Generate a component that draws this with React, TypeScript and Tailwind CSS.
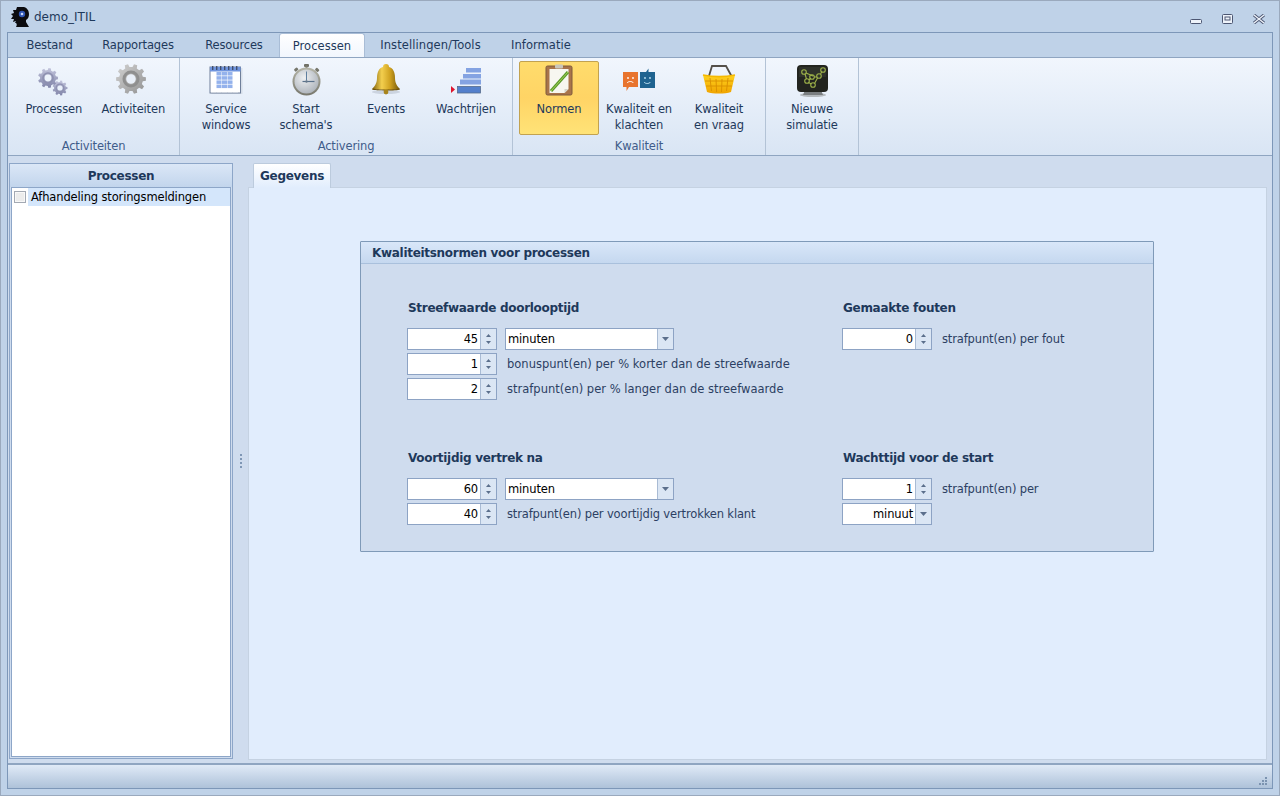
import React from "react";

function gearPath(cx: number, cy: number, r: number, teeth: number, hole: number) {
  const pts: string[] = [];
  const step = (Math.PI * 2) / teeth;
  for (let i = 0; i < teeth; i++) {
    const a = i * step;
    const seq: [number, number][] = [
      [a - step * 0.3, r * 0.8],
      [a - step * 0.18, r],
      [a + step * 0.18, r],
      [a + step * 0.3, r * 0.8],
    ];
    for (const [t, rad] of seq) pts.push(`${(cx + Math.cos(t) * rad).toFixed(2)} ${(cy + Math.sin(t) * rad).toFixed(2)}`);
  }
  const ring = `M${cx - hole} ${cy}a${hole} ${hole} 0 1 0 ${hole * 2} 0a${hole} ${hole} 0 1 0 ${-hole * 2} 0Z`;
  return `M${pts.join("L")}Z${ring}`;
}

const Svg = ({ children }: { children: React.ReactNode }) => (
  <svg width="36" height="36" viewBox="0 0 36 36" className="block">{children}</svg>
);

const GearsIcon = () => (
  <Svg>
    <defs>
      <linearGradient id="g1" x1="0" y1="0" x2="0" y2="1"><stop offset="0" stopColor="#c2c4dc" /><stop offset="1" stopColor="#8084a8" /></linearGradient>
    </defs>
    <path d={gearPath(12, 15, 10, 9, 3.4)} fill="url(#g1)" fillRule="evenodd" />
    <circle cx="12" cy="15" r="5" fill="none" stroke="#8d90b0" strokeWidth="1.6" />
    <path d={gearPath(24, 25, 7.5, 9, 2.6)} fill="url(#g1)" fillRule="evenodd" />
    <circle cx="24" cy="25" r="3.8" fill="none" stroke="#8d90b0" strokeWidth="1.3" />
  </Svg>
);

const GearIcon = () => (
  <Svg>
    <defs>
      <linearGradient id="g2" x1="0" y1="0" x2="1" y2="1"><stop offset="0" stopColor="#d2d2d2" /><stop offset="1" stopColor="#929292" /></linearGradient>
    </defs>
    <path d={gearPath(16, 16, 15, 10, 4.5)} fill="url(#g2)" fillRule="evenodd" />
    <circle cx="16" cy="16" r="7" fill="none" stroke="#8f8f8f" strokeWidth="3" />
    <circle cx="16" cy="16" r="4.5" fill="#e9eff8" />
  </Svg>
);

const CalendarIcon = () => {
  const cols = [3, 8.5, 14, 19.5, 25];
  const rows = [9, 13.2, 17.4, 21.6, 25.8];
  return (
    <Svg>
      <rect x="3.5" y="5" width="31" height="26" fill="#c3cbd8" opacity="0.5" />
      <rect x="2" y="4" width="30.500" height="26" fill="#ffffff" stroke="#6f7f9a" />
      <rect x="2" y="4" width="30.500" height="4.500" fill="#6f94de" />
      {cols.map((c, i) =>
        rows.map((r, j) => (
          <rect key={`${i}-${j}`} x={c} y={r} width="5" height="3.500" fill={i === 0 || i === 4 ? "#ffffff" : j === 4 ? "#ffffff" : "#94b2ec"} />
        ))
      )}
      {[4, 8, 12, 16, 20, 24, 28].map((x) => (
        <rect key={x} x={x} y="3" width="1.400" height="4" fill="#3f4f70" />
      ))}
    </Svg>
  );
};

const WatchIcon = () => (
  <Svg>
    <defs>
      <radialGradient id="w1" cx="0.4" cy="0.35" r="0.8"><stop offset="0" stopColor="#eef0f2" /><stop offset="1" stopColor="#a3aab2" /></radialGradient>
      <linearGradient id="w2" x1="0" y1="0" x2="0" y2="1"><stop offset="0" stopColor="#b5b5a8" /><stop offset="1" stopColor="#77776c" /></linearGradient>
    </defs>
    <g transform="translate(1.500 -1.500)">
      <rect x="14.500" y="2.500" width="5" height="3" rx="1" fill="#6e6e64" />
      <rect x="16" y="4" width="2" height="4" fill="#7c7c70" />
      <rect x="26" y="7" width="4" height="3" rx="1" fill="#77776c" transform="rotate(40 28 8)" />
      <rect x="4.500" y="7" width="4" height="3" rx="1" fill="#77776c" transform="rotate(-40 6 8)" />
      <circle cx="17" cy="20" r="14" fill="url(#w2)" />
      <circle cx="17" cy="20" r="12" fill="url(#w1)" />
      <path d="M17 10v9" stroke="#5f7f9f" strokeWidth="1" />
      <path d="M13 20h12" stroke="#59718a" strokeWidth="1.200" />
      <circle cx="17" cy="20" r="1.200" fill="#66788a" />
    </g>
  </Svg>
);

const BellIcon = () => (
  <Svg>
    <defs>
      <linearGradient id="b1" x1="0" y1="0" x2="1" y2="0"><stop offset="0" stopColor="#7d5f0c" /><stop offset="0.35" stopColor="#f3cf4e" /><stop offset="0.65" stopColor="#cfa11f" /><stop offset="1" stopColor="#6f540a" /></linearGradient>
    </defs>
    <g transform="translate(0 -1)">
      <ellipse cx="18" cy="30" rx="14" ry="2" fill="#bfc8d4" opacity="0.7" />
      <path d="M18 2c-2 0-3 1-3 3-4 1-6 5-6 11 0 6-3 9-5 11 3 1.500 25 1.500 28 0-2-2-5-5-5-11 0-6-2-10-6-11 0-2-1-3-3-3z" fill="url(#b1)" />
      <path d="M5 26.500c4 1.500 22 1.500 26 0l1 1c-3 1.500-25 1.500-28 0z" fill="#6e520b" />
      <circle cx="18" cy="30" r="2.400" fill="#a8841c" />
    </g>
  </Svg>
);

const QueueIcon = () => (
  <Svg>
    <g transform="translate(-4 -1)">
      <rect x="22" y="6" width="15" height="4.500" fill="#84a3e2" />
      <rect x="19" y="12" width="18" height="4.500" fill="#84a3e2" />
      <rect x="16" y="17.500" width="21" height="5" fill="#84a3e2" />
      <rect x="13.500" y="24.500" width="23" height="6.500" fill="#5480cc" stroke="#566b8c" strokeWidth="0.800" />
      <path d="M7 24v7l4-3.500z" fill="#e0142c" />
    </g>
  </Svg>
);

const ClipIcon = () => (
  <Svg>
    <rect x="5" y="3" width="26" height="29" rx="1.500" fill="#a9744a" stroke="#7e5a3c" />
    <path d="M8.500 6h19v20l-4 4h-15z" fill="#f7f7f0" />
    <path d="M27.500 26l-4 4v-4z" fill="#d5d5c8" />
    <rect x="14" y="1.500" width="8" height="4" rx="1" fill="#c9c6bb" />
    <path d="M27 9L10 28" stroke="#5a9a2a" strokeWidth="3.200" />
    <path d="M27 9L10 28" stroke="#a3cf56" strokeWidth="1" />
  </Svg>
);

const FacesIcon = () => (
  <Svg>
    <g transform="translate(1 -3)">
      <path d="M1 12h15v15H7l-2.500 4v-4H1z" fill="#e8742e" />
      <circle cx="6" cy="18" r="0.900" fill="#fff" /><circle cx="11" cy="18" r="0.900" fill="#fff" />
      <path d="M5 23c1.500-2 5-2 6.500 0" stroke="#fff" fill="none" />
    </g>
    <g transform="translate(1 0)">
      <path d="M18 9h6l2.500-3.500V9H33v16H18z" fill="#1f6390" />
      <circle cx="23" cy="15" r="0.900" fill="#bfe3f5" /><circle cx="28" cy="15" r="0.900" fill="#bfe3f5" />
      <path d="M22 19c1.500 2 5 2 6.500 0" stroke="#bfe3f5" fill="none" />
    </g>
  </Svg>
);

const BasketIcon = () => (
  <Svg>
    <defs>
      <linearGradient id="k1" x1="0" y1="0" x2="0" y2="1"><stop offset="0" stopColor="#ffd21e" /><stop offset="1" stopColor="#f0a400" /></linearGradient>
    </defs>
    <g transform="translate(0 -2)">
      <path d="M8 15L11 5h14l6 11" fill="none" stroke="#54504a" strokeWidth="1.800" />
      <path d="M2 14c10 2 22 2 32 0l-4 17c-6 2-18 2-24 0z" fill="url(#k1)" />
      <path d="M9 17l1.500 13M15 18l.6 13M21 18l-.5 13M27 17l-1.500 13M4 20h28M5 25h26" stroke="#d98e00" strokeWidth="0.900" />
      <path d="M2 14c10 2 22 2 32 0" fill="none" stroke="#f5b800" strokeWidth="1.600" />
    </g>
  </Svg>
);

const MonitorIcon = () => (
  <Svg>
    <g transform="translate(1 -1)">
      <ellipse cx="18" cy="33" rx="13" ry="2" fill="#b4b9bd" />
      <path d="M10 28h16l2 5H8z" fill="#7a7e80" />
      <rect x="2" y="3" width="31" height="27" rx="4" fill="#22241f" />
      <path d="M4 5h27v10H4z" fill="#3a3d35" opacity="0.5" />
      <g fill="none" stroke="#9db24a" strokeWidth="1.100">
        <circle cx="9" cy="10" r="2.300" /><circle cx="12" cy="19" r="2.300" /><circle cx="17" cy="15" r="2.300" /><circle cx="24" cy="14" r="2.300" /><circle cx="28" cy="8" r="2.300" /><circle cx="18" cy="23" r="2.300" />
        <path d="M11 11l7 3M10 12l1.500 5M14 18l2-2M19 15h3M25.500 12l1.500-2.500M13.500 20.500l3 1.500M22.500 16l-3 5.500" />
      </g>
    </g>
  </Svg>
);

const Logo = () => (
  <svg width="19" height="20" viewBox="0 0 19 20" className="block">
    <path d="M9 0c5-1 9 2 9 7 0 3-1 5-3 6v2c1 2 2 3 3 5H5c1-2 1-3 0-4l-1 0 1-2-3 1 1-3-3 0 2-3-2-2 3-1-1-3 3 0 1-3z" fill="#0b0b0f" />
    <circle cx="11" cy="7" r="3.200" fill="#2f55b5" />
    <circle cx="11" cy="7" r="1.300" fill="#c8d8f8" />
  </svg>
);

const RibbonButton = ({ icon, lines, active }: { icon: React.ReactNode; lines: string[]; active?: boolean }) => (
  <div className={`w-[80px] h-[74px] flex flex-col items-center rounded-[2px] border ${active ? "border-[#c2a250] bg-gradient-to-b from-[#ffdc6c] via-[#ffd465] to-[#ffe377]" : "border-transparent"}`}>
    <div className="mt-[1px] h-[36px]">{icon}</div>
    <div className="mt-[2px] text-center leading-[16px] text-[#1e395b]">
      {lines.map((l) => <div key={l} className="whitespace-nowrap">{l}</div>)}
    </div>
  </div>
);

const RibbonGroup = ({ label, children, w }: { label: string; children?: React.ReactNode; w: string }) => (
  <div className={`${w} flex flex-col border-r border-[#b3c3d6]`}>
    <div className="flex px-[6px] pt-[3px] h-[77px] box-content">{children}</div>
    <div className="h-[16px] leading-[16px] text-center text-[#3f5c8a]">{label}</div>
  </div>
);

const Arrow = ({ up }: { up: boolean }) => (
  <svg width="5" height="3" viewBox="0 0 5 3" className="block">
    <path d={up ? "M2.500 0L5 3H0z" : "M0 0h5L2.500 3z"} fill="#5b6f8c" />
  </svg>
);

const Spin = ({ value }: { value: string }) => (
  <div className="w-[90px] h-[22px] flex border border-[#8da3c4] bg-white shrink-0">
    <div className="flex-1 text-right pr-[2px] leading-[21px] text-black">{value}</div>
    <div className="w-[16px] border-l border-[#a9bbd4] bg-[#dbe6f4] flex flex-col items-center justify-center gap-[4px]">
      <Arrow up /><Arrow up={false} />
    </div>
  </div>
);

const Combo = ({ value, w, right }: { value: string; w: string; right?: boolean }) => (
  <div className={`${w} h-[22px] flex border border-[#8da3c4] bg-white shrink-0`}>
    <div className={`flex-1 leading-[21px] text-black ${right ? "text-right pr-[2px]" : "pl-[2px]"}`}>{value}</div>
    <div className="w-[16px] border-l border-[#a9bbd4] bg-[#dbe6f4] flex items-center justify-center">
      <svg width="7" height="4" viewBox="0 0 7 4" className="block"><path d="M0 0h7L3.500 4z" fill="#5b6f8c" /></svg>
    </div>
  </div>
);

const Row = ({ children }: { children: React.ReactNode }) => (
  <div className="flex items-center h-[22px]">{children}</div>
);

const Note = ({ children, wide }: { children: React.ReactNode; wide?: boolean }) => (
  <span className={`ml-[10px] text-[#2c3f63] whitespace-nowrap leading-[18px] mt-[-1px] ${wide ? "tracking-[0.01px]" : ""}`}>{children}</span>
);

const Heading = ({ children }: { children: React.ReactNode }) => (
  <div className="text-[12px] font-bold text-[#1e395b] leading-[16px] h-[16px] mb-[12px] ml-[1px] whitespace-nowrap tracking-[-0.3px]">{children}</div>
);

const tabs = [
  ["Bestand", "w-[75px]", ""],
  ["Rapportages", "w-[102px]", ""],
  ["Resources", "w-[90px]", ""],
  ["Processen", "w-[86px]", "tracking-[0.05px]"],
  ["Instellingen/Tools", "w-[131px]", "tracking-[0.08px]"],
  ["Informatie", "w-[90px]", "tracking-[0.05px]"],
];

export default function App() {
  return (
    <div className="w-[1280px] h-[796px] flex flex-col bg-[#bfd2e8] border border-[#9aa9bd] text-[11.5px] tracking-[-0.14px] font-['DejaVu_Sans',sans-serif] overflow-hidden">
      <div className="h-[31px] flex items-center pl-[10px] shrink-0">
        <Logo />
        <span className="ml-[4px] text-[#1e395b] text-[12px] tracking-normal mt-[1px]">demo_ITIL</span>
        <div className="ml-auto mr-[14px] mt-[4px] flex items-center gap-[20px]">
          <svg width="12" height="6" viewBox="0 0 12 6" className="block mt-[6px]"><rect x="0.500" y="0.500" width="11" height="4" rx="1" fill="#eef3fa" stroke="#4c5672" /></svg>
          <svg width="11" height="10" viewBox="0 0 11 10" className="block"><rect x="0.500" y="0.500" width="10" height="9" rx="1" fill="#eef3fa" stroke="#4c5672" /><rect x="3" y="3" width="5" height="3" fill="none" stroke="#4c5672" /></svg>
          <svg width="12" height="10" viewBox="0 0 12 10" className="block"><path d="M1 1l10 8M11 1L1 9" stroke="#4c5672" strokeWidth="3.200" /><path d="M1 1l10 8M11 1L1 9" stroke="#eef3fa" strokeWidth="1.400" /></svg>
        </div>
      </div>

      <div className="flex-1 mx-[6px] mb-[6px] flex flex-col border border-[#7d97b8] min-h-0">
        <div className="h-[24px] flex items-end pl-[4px] bg-[#bfd2e8] shrink-0">
          {tabs.map(([t, w, track]) => (
            <div
              key={t}
              className={`${w} ${track} h-[24px] leading-[25px] text-center text-[#1e395b] ${t === "Processen" ? "rounded-t-[3px] bg-gradient-to-b from-white to-[#f1f6fd] border border-b-0 border-[#a9bdd6]" : ""}`}
            >
              {t}
            </div>
          ))}
        </div>
        <div className="h-[99px] shrink-0 flex bg-gradient-to-b from-[#f1f6fd] to-[#d9e5f4] border-t border-b border-[#8fa5c1]">
          <RibbonGroup label="Activiteiten" w="w-[172px]">
            <RibbonButton icon={<GearsIcon />} lines={["Processen"]} />
            <RibbonButton icon={<GearIcon />} lines={["Activiteiten"]} />
          </RibbonGroup>
          <RibbonGroup label="Activering" w="w-[333px]">
            <RibbonButton icon={<CalendarIcon />} lines={["Service", "windows"]} />
            <RibbonButton icon={<WatchIcon />} lines={["Start", "schema's"]} />
            <RibbonButton icon={<BellIcon />} lines={["Events"]} />
            <RibbonButton icon={<QueueIcon />} lines={["Wachtrijen"]} />
          </RibbonGroup>
          <RibbonGroup label="Kwaliteit" w="w-[253px]">
            <RibbonButton active icon={<ClipIcon />} lines={["Normen"]} />
            <RibbonButton icon={<FacesIcon />} lines={["Kwaliteit en", "klachten"]} />
            <RibbonButton icon={<BasketIcon />} lines={["Kwaliteit", "en vraag"]} />
          </RibbonGroup>
          <RibbonGroup label="" w="w-[93px]">
            <RibbonButton icon={<MonitorIcon />} lines={["Nieuwe", "simulatie"]} />
          </RibbonGroup>
        </div>

        <div className="flex-1 flex min-h-0 bg-[#cfdcee]">
          <div className="w-[224px] ml-[1px] mt-[7px] mb-[4px] flex flex-col border border-[#8da6c8] shrink-0">
            <div className="h-[23px] text-[12px] text-center font-bold leading-[24px] text-[#1e395b] bg-gradient-to-b from-[#dbe7f7] to-[#c2d5ec] tracking-[-0.3px] shrink-0">Processen</div>
            <div className="flex-1 mx-[1px] mb-[1px] bg-white border border-[#8da6c8]">
              <div className="h-[18px] flex items-center pl-[2px]">
                <div className="w-[12px] h-[12px] border border-[#a3a9b3] bg-[#ececec] shadow-[inset_0_0_0_1px_#f8f8f8] shrink-0" />
                <div className="flex-1 ml-[2px] h-[18px] bg-[#d4e6fb] pl-[3px] leading-[19px] text-black whitespace-nowrap">Afhandeling storingsmeldingen</div>
              </div>
            </div>
          </div>

          <div className="w-[15px] flex flex-col items-center justify-center gap-[1px] shrink-0 pt-[4px]">
            {[0, 1, 2, 3].map((i) => <div key={i} className="w-[2px] h-[2px] mb-[1px] bg-[#7f97b5]" />)}
          </div>

          <div className="flex-1 flex flex-col min-w-0 mr-[5px] mb-[3px]">
            <div className="h-[24px] mt-[7px] pl-[5px] flex items-end shrink-0">
              <div className="w-[78px] h-[25px] relative top-[1px] text-[12px] text-center font-bold text-[#1e395b] leading-[24px] rounded-t-[2px] bg-gradient-to-b from-white to-[#e1edfd] border border-b-0 border-[#bccbdd] tracking-[-0.3px]">Gegevens</div>
            </div>
            <div className="flex-1 bg-[#e1edfd] border border-[#c5d2e2] pt-[53px] pl-[111px]">
              <div className="w-[794px] h-[311px] bg-[#cfdcee] border border-[#7f9ab8] rounded-[1px] flex flex-col">
                <div className="h-[22px] text-[12px] pl-[11px] font-bold leading-[23px] text-[#1e395b] bg-gradient-to-b from-[#d9e7f9] to-[#c5d8ef] border-b border-[#a9c0dc] tracking-[-0.3px] shrink-0">Kwaliteitsnormen voor processen</div>
                <div className="grid grid-cols-[435px_1fr] grid-rows-[150px_auto] pl-[46px] pt-[36px]">
                  <div>
                    <Heading>Streefwaarde doorlooptijd</Heading>
                    <div className="flex flex-col gap-[3px]">
                      <Row><Spin value="45" /><div className="ml-[8px]"><Combo value="minuten" w="w-[169px]" /></div></Row>
                      <Row><Spin value="1" /><Note wide>bonuspunt(en) per % korter dan de streefwaarde</Note></Row>
                      <Row><Spin value="2" /><Note wide>strafpunt(en) per % langer dan de streefwaarde</Note></Row>
                    </div>
                  </div>
                  <div>
                    <Heading>Gemaakte fouten</Heading>
                    <Row><Spin value="0" /><Note>strafpunt(en) per fout</Note></Row>
                  </div>
                  <div>
                    <Heading>Voortijdig vertrek na</Heading>
                    <div className="flex flex-col gap-[3px]">
                      <Row><Spin value="60" /><div className="ml-[8px]"><Combo value="minuten" w="w-[169px]" /></div></Row>
                      <Row><Spin value="40" /><Note>strafpunt(en) per voortijdig vertrokken klant</Note></Row>
                    </div>
                  </div>
                  <div>
                    <Heading>Wachttijd voor de start</Heading>
                    <div className="flex flex-col gap-[3px]">
                      <Row><Spin value="1" /><Note>strafpunt(en) per</Note></Row>
                      <Row><Combo value="minuut" w="w-[90px]" right /></Row>
                    </div>
                  </div>
                </div>
              </div>
            </div>
          </div>
        </div>

        <div className="h-[25px] shrink-0 relative bg-gradient-to-b from-[#e0eaf7] to-[#aec2d9] border-t-2 border-[#8fa5c1]">
          <svg width="12" height="12" viewBox="0 0 12 12" className="absolute right-[3px] bottom-[1px]">
            {[[8, 0], [5, 3], [8, 3], [2, 6], [5, 6], [8, 6]].map(([x, y]) => (
              <rect key={`${x}-${y}`} x={x} y={y + 2} width="2" height="2" fill="#7b93b0" />
            ))}
          </svg>
        </div>
      </div>
    </div>
  );
}
